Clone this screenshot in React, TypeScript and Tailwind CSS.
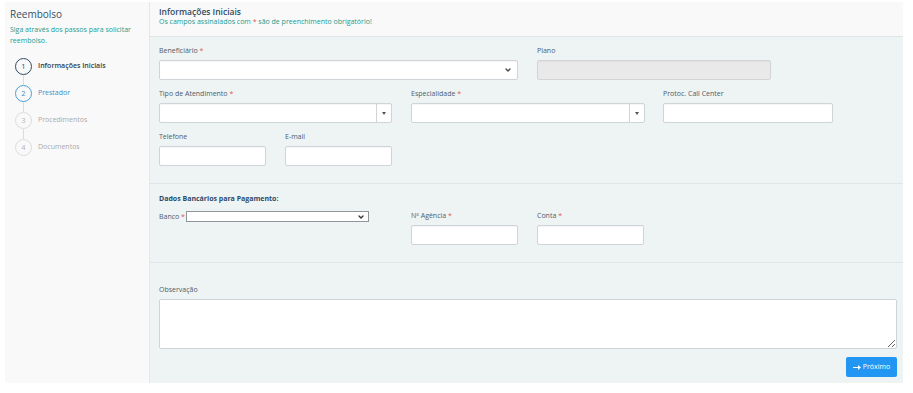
import { ChevronDown } from 'lucide-react';

const label = 'block text-[7px] leading-[10px] text-[#4f5d6b]';
const box = 'block h-[20px] border rounded-[2px] shadow-[inset_0_1px_1px_rgba(0,0,0,0.04)]';
const input = `${box} bg-white border-[#cfd4d8]`;

function Req() {
  return <span className="text-[#e4574f]"> *</span>;
}

function Field({ title, required, width, children }: { title: string; required?: boolean; width: string; children: React.ReactNode }) {
  return (
    <div className={width}>
      <label className={`${label} mt-[1px] mb-[4px]`}>
        {title}
        {required && <Req />}
      </label>
      {children}
    </div>
  );
}

function CaretSelect() {
  return (
    <div className={`${input} flex`}>
      <div className="flex-1" />
      <div className="w-[15px] border-l border-[#cfd4d8] flex items-center justify-center">
        <span className="block w-0 h-0 border-l-[2.5px] border-r-[2.5px] border-t-[3px] border-l-transparent border-r-transparent border-t-[#555]" />
      </div>
    </div>
  );
}

const steps = [
  { n: 1, text: 'Informações Iniciais', state: 'done' },
  { n: 2, text: 'Prestador', state: 'next' },
  { n: 3, text: 'Procedimentos', state: 'off' },
  { n: 4, text: 'Documentos', state: 'off' },
];

export default function App() {
  return (
    <div className="w-[913px] h-[393px] bg-white pt-[2px] pl-[5px] pr-[10px] font-['Open_Sans',sans-serif]">
      <div className="flex h-[381px]">
        {/* Sidebar */}
        <aside className="w-[145px] bg-[#f9f9f9] border-r border-[#e4e6e8] pl-[5px] pr-[4px] pt-[6px]">
          <h1 className="text-[10px] leading-[12px] text-[#33506a]">Reembolso</h1>
          <p className="mt-[4px] text-[7px] leading-[11px] text-[#22998f]">Siga através dos passos para solicitar reembolso.</p>
          <ol className="mt-[12px] pl-[5px]">
            {steps.map((s, i) => (
              <li key={s.n}>
                <div className="flex items-center h-[17px]">
                  <span
                    className={`w-[17px] h-[17px] rounded-full bg-[#f9f9f9] flex items-center justify-center text-[7.5px] ${
                      s.state === 'done'
                        ? 'border-[1.5px] border-[#2e4a62] text-[#2e4a62]'
                        : s.state === 'next'
                        ? 'border-[1.5px] border-[#4c9fd0] text-[#3d8fc2]'
                        : 'border border-[#dcdcdc] text-[#b5b5b5]'
                    }`}
                  >
                    {s.n}
                  </span>
                  <span
                    className={`ml-[6px] text-[7px] ${
                      s.state === 'done'
                        ? 'font-semibold text-[#2e3e4e]'
                        : s.state === 'next'
                        ? 'text-[#3d8fc2]'
                        : 'text-[#aaaaaa]'
                    }`}
                  >
                    {s.text}
                  </span>
                </div>
                {i < steps.length - 1 && <div className="ml-[8px] w-px h-[10px] bg-[#dcdcdc]" />}
              </li>
            ))}
          </ol>
        </aside>

        {/* Main */}
        <main className="flex-1 bg-[#eef3f4] flex flex-col">
          <header className="h-[36px] bg-[#f9f9f9] border-b border-[#dfe5e7] pl-[9px] pt-[5px]">
            <h2 className="text-[8.5px] leading-[10px] font-semibold text-[#2e4a62]">Informações Iniciais</h2>
            <p className="text-[7px] leading-[9px] text-[#22998f]">
              Os campos assinalados com <span className="text-[#e4574f]">*</span> são de preenchimento obrigatório!
            </p>
          </header>

          {/* Section 1 */}
          <section className="pl-[9px] pr-[6px] pt-[8px] pb-[17px] border-b border-[#e0e6e8]">
            <div className="flex gap-[19px]">
              <Field title="Beneficiário" required width="w-[359px]">
                <div className={`${input} flex items-center justify-end pr-[5px]`}>
                  <ChevronDown className="w-[8px] h-[8px] text-[#444]" strokeWidth={4} />
                </div>
              </Field>
              <Field title="Plano" width="w-[234px]">
                <div className={`${box} bg-[#e9e9e9] border-[#d4d4d4]`} />
              </Field>
            </div>
            <div className="flex gap-[19px] mt-[8px]">
              <Field title="Tipo de Atendimento" required width="w-[233px]">
                <CaretSelect />
              </Field>
              <Field title="Especialidade" required width="w-[234px]">
                <CaretSelect />
              </Field>
              <Field title="Protoc. Call Center" width="w-[170px] -ml-[1px]">
                <div className={input} />
              </Field>
            </div>
            <div className="flex gap-[19px] mt-[8px]">
              <Field title="Telefone" width="w-[107px]">
                <div className={input} />
              </Field>
              <Field title="E-mail" width="w-[107px]">
                <div className={input} />
              </Field>
            </div>
          </section>

          {/* Section 2 */}
          <section className="pl-[9px] pr-[6px] pt-[10px] pb-[17px] border-b border-[#e0e6e8]">
            <h3 className="text-[7px] leading-[10px] font-bold text-[#2c4a66]">Dados Bancários para Pagamento:</h3>
            <div className="flex gap-[19px] mt-[6px]">
              <div className="w-[233px] flex items-start pt-[1px]">
                <span className="text-[7px] leading-[11px] text-[#4f5d6b]">
                  Banco<Req />
                </span>
                <div className="ml-[1px] w-[183px] h-[11px] bg-white border border-[#8f959b] flex items-center justify-end pr-[3px]">
                  <ChevronDown className="w-[8px] h-[8px] text-[#333]" strokeWidth={4} />
                </div>
              </div>
              <div className="w-[107px]">
                <label className={`${label} mt-[1px] mb-[4px]`}>
                  Nº Agência<Req />
                </label>
                <div className={input} />
              </div>
              <div className="w-[107px]">
                <label className={`${label} mt-[1px] mb-[4px]`}>
                  Conta<Req />
                </label>
                <div className={input} />
              </div>
            </div>
          </section>

          {/* Section 3 */}
          <section className="pl-[9px] pr-[6px] pt-[22px] pb-[6px]">
            <label className={`${label} mb-[4px]`}>Observação</label>
            <textarea
              readOnly
              className="block w-full h-[50px] bg-white border border-[#cfd4d8] rounded-[2px] outline-none"
            />
            <div className="flex justify-end mt-[8px]">
              <button className="w-[51px] h-[20px] bg-[#2196f3] rounded-[2px] text-white text-[7px] flex items-center justify-center gap-[2px]">
                <svg width="8" height="5" viewBox="0 0 8 5" fill="white">
                  <rect x="0" y="2" width="6" height="1" />
                  <path d="M5 0 L8 2.5 L5 5 Z" />
                </svg>
                Próximo
              </button>
            </div>
          </section>
        </main>
      </div>
    </div>
  );
}
